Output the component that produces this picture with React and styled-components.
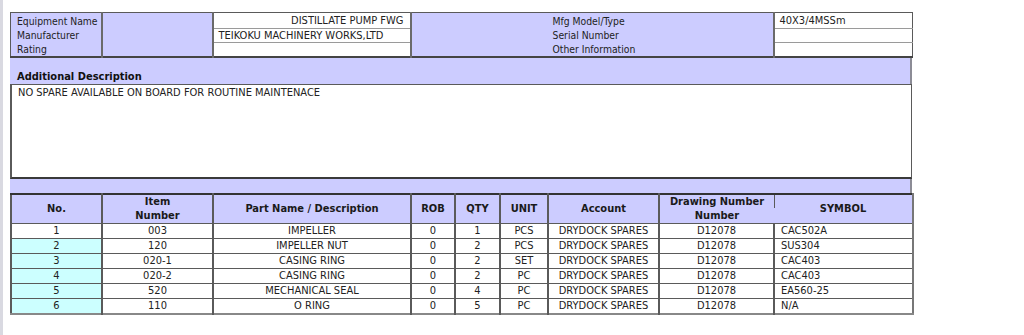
import React from "react";
import styled, { createGlobalStyle } from "styled-components";

const Global = createGlobalStyle`
  html, body { margin: 0; padding: 0; background: #fff; }
  body {
    font-family: "DejaVu Sans Condensed", "DejaVu Sans", Verdana, sans-serif;
    font-stretch: condensed;
    font-size: 11px;
    color: #222;
  }
`;

const LAV = "#ccccff";
const CYAN = "#ccffff";
const LINE = "#5a5a5a";

const Page = styled.div`
  display: flex;
  min-height: 335px;
`;

const Strip = styled.div`
  width: 3px;
  flex: none;
  background: #d9d9e1;
`;

const Content = styled.div`
  padding: 12px 0 0 7px;
  width: 902px;
  display: flex;
  flex-direction: column;
`;

const InfoTable = styled.table`
  border-collapse: collapse;
  table-layout: fixed;
  width: 902px;
  border: 1px solid ${LINE};
  border-bottom: 2px solid #444;
`;

const InfoCell = styled.td`
  padding: 0 ${(p) => p.$padR || 0}px 0 ${(p) => p.$padL || 0}px;
  height: ${(p) => p.$h || 13}px;
  line-height: ${(p) => p.$h || 13}px;
  white-space: nowrap;
  overflow: hidden;
  vertical-align: top;
  background: ${(p) => (p.$lav ? LAV : "#fff")};
  text-align: ${(p) => p.$align || "left"};
  border-left: 2px solid #6a6a6a;
  border-top: ${(p) => (p.$lav ? "none" : `1px solid ${LINE}`)};
  border-bottom: ${(p) => (p.$lav ? "none" : "1px solid #9a9a9a")};
`;

const LabelStack = styled.div`
  display: flex;
  flex-direction: column;
  box-sizing: border-box;
  padding: 1px 0 0 ${(p) => p.$indent}px;
  font-size: 10.3px;
  line-height: 14px;
  height: 43px;
  overflow: hidden;
`;

const Band = styled.div`
  background: ${LAV};
  height: ${(p) => p.$h}px;
  box-sizing: border-box;
  border-right: 2px solid #8c8c96;
  padding: ${(p) => p.$padTop || 0}px 0 0 7px;
  font-weight: bold;
  line-height: 14px;
  color: #111;
`;

const DescBox = styled.div`
  height: 95px;
  box-sizing: border-box;
  border: 1px solid ${LINE};
  border-left-width: 2px;
  border-bottom: 2px solid #3a3a3a;
  padding: 1px 0 0 6px;
  line-height: 13px;
`;

const PartsTable = styled.table`
  border-collapse: collapse;
  table-layout: fixed;
  width: 902px;
  border-top: 2px solid #333;
  border-left: 2px solid ${LINE};
  border-right: 2px solid #777;
  border-bottom: 2px solid #888;
`;

const Th = styled.th`
  position: relative;
  background: ${LAV};
  font-weight: bold;
  height: 27px;
  padding: 0;
  line-height: 14px;
  text-align: center;
  vertical-align: middle;
  color: #1a1a1a;
  border-left: ${(p) => (p.$first || p.$open ? "none" : `2px solid ${LINE}`)};
  border-bottom: 1px solid ${LINE};
  &::before {
    content: "";
    display: ${(p) => (p.$open ? "block" : "none")};
    position: absolute;
    left: 0;
    top: 0;
    width: 1px;
    height: 13px;
    background: ${LINE};
  }
`;

const Td = styled.td`
  height: 14px;
  padding: ${(p) => (p.$align === "left" ? "0 0 0 6px" : "0")};
  line-height: 14px;
  white-space: nowrap;
  overflow: hidden;
  text-align: ${(p) => p.$align || "center"};
  background: ${(p) => p.$bg || "#fff"};
  border-left: ${(p) => (p.$first ? "none" : `2px solid ${LINE}`)};
  border-bottom: 1px solid ${LINE};
`;

const widths = [91, 111, 198, 44, 45, 48, 111, 115, 139];

const rows = [
  ["1", "003", "IMPELLER", "0", "1", "PCS", "DRYDOCK SPARES", "D12078", "CAC502A"],
  ["2", "120", "IMPELLER NUT", "0", "2", "PCS", "DRYDOCK SPARES", "D12078", "SUS304"],
  ["3", "020-1", "CASING RING", "0", "2", "SET", "DRYDOCK SPARES", "D12078", "CAC403"],
  ["4", "020-2", "CASING RING", "0", "2", "PC", "DRYDOCK SPARES", "D12078", "CAC403"],
  ["5", "520", "MECHANICAL SEAL", "0", "4", "PC", "DRYDOCK SPARES", "D12078", "EA560-25"],
  ["6", "110", "O RING", "0", "5", "PC", "DRYDOCK SPARES", "D12078", "N/A"],
];

const headers = [
  "No.",
  <>Item<br />Number</>,
  "Part Name / Description",
  "ROB",
  "QTY",
  "UNIT",
  "Account",
  <>Drawing Number<br />Number</>,
  "SYMBOL",
];

export default function App() {
  return (
    <>
      <Global />
      <Page>
        <Strip />
        <Content>
          <InfoTable>
            <colgroup>
              <col style={{ width: 91 }} />
              <col style={{ width: 111 }} />
              <col style={{ width: 198 }} />
              <col style={{ width: 363 }} />
              <col style={{ width: 139 }} />
            </colgroup>
            <tbody>
              <tr>
                <InfoCell $lav rowSpan={3} style={{ borderLeft: "none" }}>
                  <LabelStack $indent={6}>
                    <span>Equipment Name</span>
                    <span>Manufacturer</span>
                    <span>Rating</span>
                  </LabelStack>
                </InfoCell>
                <InfoCell $lav rowSpan={3} />
                <InfoCell $h={15} $align="right" $padR={6}>DISTILLATE PUMP FWG</InfoCell>
                <InfoCell $lav rowSpan={3}>
                  <LabelStack $indent={141}>
                    <span>Mfg Model/Type</span>
                    <span>Serial Number</span>
                    <span>Other Information</span>
                  </LabelStack>
                </InfoCell>
                <InfoCell $h={15} $padL={5}>40X3/4MSSm</InfoCell>
              </tr>
              <tr>
                <InfoCell $padL={5}>TEIKOKU MACHINERY WORKS,LTD</InfoCell>
                <InfoCell />
              </tr>
              <tr>
                <InfoCell />
                <InfoCell />
              </tr>
            </tbody>
          </InfoTable>
          <Band $h={26} $padTop={12}>Additional Description</Band>
          <DescBox>NO SPARE AVAILABLE ON BOARD FOR ROUTINE MAINTENACE</DescBox>
          <Band $h={14} />
          <PartsTable>
            <colgroup>
              {widths.map((w, i) => (
                <col key={i} style={{ width: w }} />
              ))}
            </colgroup>
            <thead>
              <tr>
                {headers.map((h, i) => (
                  <Th key={i} $first={i === 0} $open={i === 8}>
                    {h}
                  </Th>
                ))}
              </tr>
            </thead>
            <tbody>
              {rows.map((r, ri) => (
                <tr key={ri}>
                  {r.map((c, ci) => (
                    <Td
                      key={ci}
                      $first={ci === 0}
                      $align={ci === 8 ? "left" : "center"}
                      $bg={ci === 0 && ri > 0 ? CYAN : "#fff"}
                    >
                      {c}
                    </Td>
                  ))}
                </tr>
              ))}
            </tbody>
          </PartsTable>
        </Content>
      </Page>
    </>
  );
}
